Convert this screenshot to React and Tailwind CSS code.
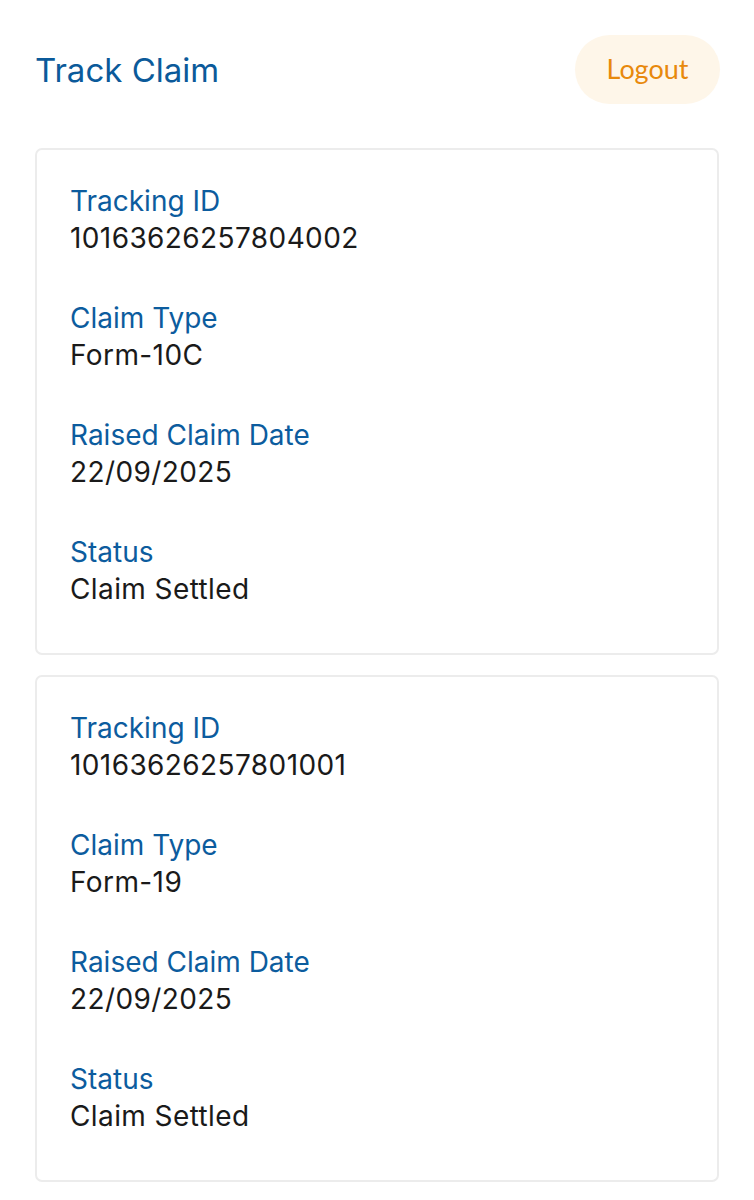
import React from "react";

const claims = [
  { id: "10163626257804002", type: "Form-10C", date: "22/09/2025", status: "Claim Settled" },
  { id: "10163626257801001", type: "Form-19", date: "22/09/2025", status: "Claim Settled" },
];

function Field({ label, value }) {
  return (
    <div className="flex flex-col">
      <div className="text-[28px] leading-[37px] text-[#0c5c9e]">{label}</div>
      <div className="text-[28px] leading-[37px] tracking-[0.4px] text-[#1a1a1a]">{value}</div>
    </div>
  );
}

export default function App() {
  return (
    <div className="min-h-[1200px] bg-white px-[35px] pt-[35px]" style={{ fontFamily: "Inter, 'Noto Sans', sans-serif" }}>
      <div className="flex items-center justify-between">
        <h1 className="text-[33px] leading-[40px] text-[#0b5a9a]">Track Claim</h1>
        <button
          className="h-[69px] w-[145px] rounded-full bg-[#fef6e9] text-[27px] text-[#e8890c] mr-[-1px]"
          style={{ fontFamily: "Lato, sans-serif" }}
        >
          Logout
        </button>
      </div>
      <div className="mt-[44px] flex flex-col gap-[20px]">
        {claims.map((c) => (
          <div key={c.id} className="rounded-[7px] border-2 border-[#ececec] pl-[33px] pt-[33px] pb-[45px] flex flex-col gap-[43px]">
            <Field label="Tracking ID" value={c.id} />
            <Field label="Claim Type" value={c.type} />
            <Field label="Raised Claim Date" value={c.date} />
            <Field label="Status" value={c.status} />
          </div>
        ))}
      </div>
    </div>
  );
}
